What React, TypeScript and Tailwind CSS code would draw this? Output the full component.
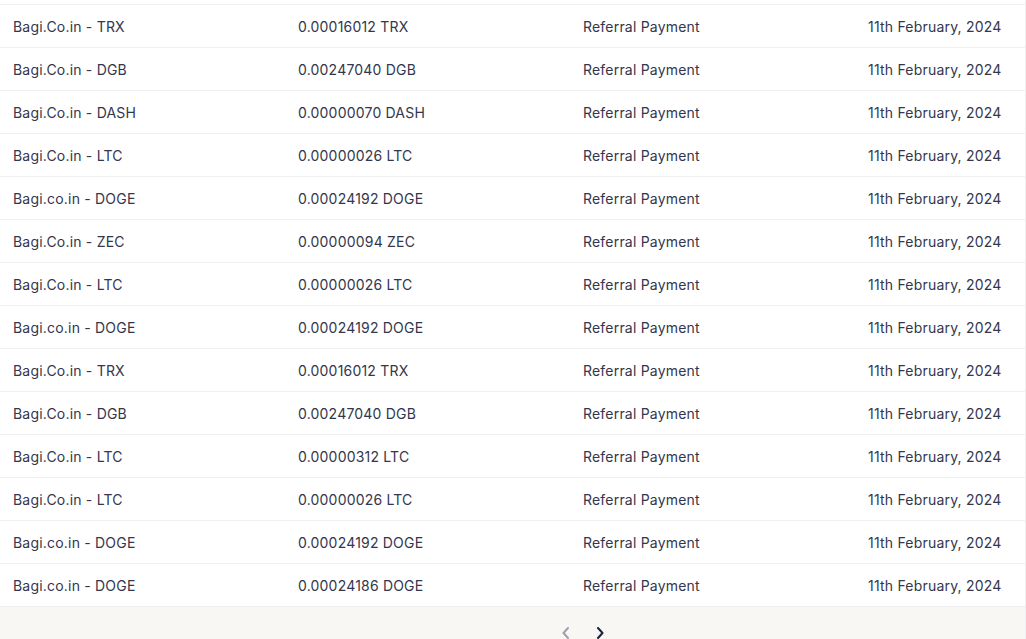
import React from 'react';

type Row = { source: string; amount: string; type: string; date: string };

const rows: Row[] = [
  { source: 'Bagi.Co.in - TRX', amount: '0.00016012 TRX', type: 'Referral Payment', date: '11th February, 2024' },
  { source: 'Bagi.Co.in - DGB', amount: '0.00247040 DGB', type: 'Referral Payment', date: '11th February, 2024' },
  { source: 'Bagi.Co.in - DASH', amount: '0.00000070 DASH', type: 'Referral Payment', date: '11th February, 2024' },
  { source: 'Bagi.Co.in - LTC', amount: '0.00000026 LTC', type: 'Referral Payment', date: '11th February, 2024' },
  { source: 'Bagi.co.in - DOGE', amount: '0.00024192 DOGE', type: 'Referral Payment', date: '11th February, 2024' },
  { source: 'Bagi.Co.in - ZEC', amount: '0.00000094 ZEC', type: 'Referral Payment', date: '11th February, 2024' },
  { source: 'Bagi.Co.in - LTC', amount: '0.00000026 LTC', type: 'Referral Payment', date: '11th February, 2024' },
  { source: 'Bagi.co.in - DOGE', amount: '0.00024192 DOGE', type: 'Referral Payment', date: '11th February, 2024' },
  { source: 'Bagi.Co.in - TRX', amount: '0.00016012 TRX', type: 'Referral Payment', date: '11th February, 2024' },
  { source: 'Bagi.Co.in - DGB', amount: '0.00247040 DGB', type: 'Referral Payment', date: '11th February, 2024' },
  { source: 'Bagi.Co.in - LTC', amount: '0.00000312 LTC', type: 'Referral Payment', date: '11th February, 2024' },
  { source: 'Bagi.Co.in - LTC', amount: '0.00000026 LTC', type: 'Referral Payment', date: '11th February, 2024' },
  { source: 'Bagi.co.in - DOGE', amount: '0.00024192 DOGE', type: 'Referral Payment', date: '11th February, 2024' },
  { source: 'Bagi.co.in - DOGE', amount: '0.00024186 DOGE', type: 'Referral Payment', date: '11th February, 2024' },
];

const Chevron: React.FC<{ dir: 'left' | 'right'; className: string }> = ({ dir, className }) => (
  <svg width="10" height="14" viewBox="0 0 10 14" fill="none" className={className}>
    <path
      d={dir === 'left' ? 'M7 2 L2.5 7 L7 12' : 'M3 2 L7.5 7 L3 12'}
      stroke="currentColor"
      strokeWidth="2"
      strokeLinecap="round"
      strokeLinejoin="round"
    />
  </svg>
);

export default function App() {
  return (
    <div className="w-[1026px] h-[639px] overflow-hidden bg-white font-['Inter',sans-serif] text-[14px] tracking-[0.2px] text-[#33364c]">
      <div className="border-r border-[#efefef]">
        {/* clipped edge of the row above */}
        <div className="h-[5px] border-b border-[#efefef]" />

        {/* Rows */}
        {rows.map((r, i) => (
          <div
            key={i}
            className="grid grid-cols-[285px_285px_285px_1fr] items-center h-[43px] pl-[13px] pt-[1px] border-b border-[#efefef] last:border-b-0"
          >
            <span>{r.source}</span>
            <span>{r.amount}</span>
            <span>{r.type}</span>
            <span>{r.date}</span>
          </div>
        ))}

        {/* Pagination */}
        <div className="h-[60px] bg-[#f8f7f3] flex justify-center pt-[19px] gap-[24px] pl-[140px]">
          <button className="h-[14px] flex items-center">
            <Chevron dir="left" className="text-[#9da1b0]" />
          </button>
          <button className="h-[14px] flex items-center">
            <Chevron dir="right" className="text-[#1d2040]" />
          </button>
        </div>
      </div>
    </div>
  );
}
